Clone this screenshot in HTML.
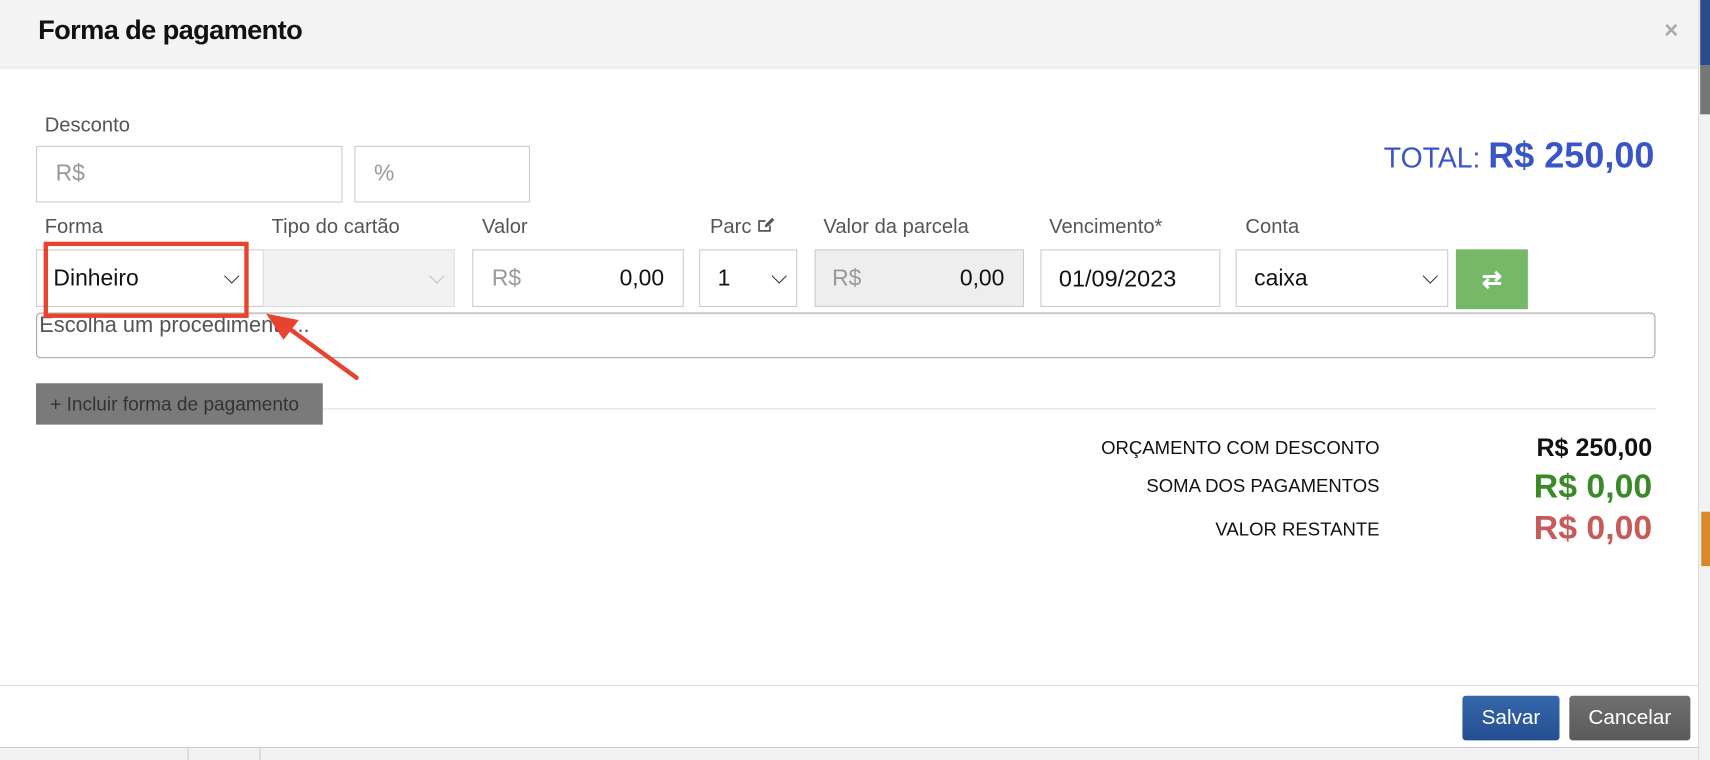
<!DOCTYPE html>
<html><head><meta charset="utf-8"><style>
*{box-sizing:border-box;margin:0;padding:0}
html,body{width:1710px;height:760px;overflow:hidden;background:#fff;font-family:"Liberation Sans",Arial,sans-serif}
#w{position:absolute;left:0;top:0;width:1568px;height:698px;transform:scale(1.09056,1.0888);transform-origin:0 0}
.a{position:absolute}
.lbl{position:absolute;font-size:18.5px;color:#555;top:197px}
.box{position:absolute;top:229px;height:53px;border:1px solid #ccc;background:#fff;font-size:21px;color:#111}
.ph{color:#999}
.chev{position:absolute;right:10px;top:18px;width:11px;height:11px;border-right:1.6px solid #222;border-bottom:1.6px solid #222;transform:rotate(45deg) scale(.9,.9);transform-origin:center}
.sl{position:absolute;font-size:17px;color:#111;right:303px}
.sv{position:absolute;right:53px;font-weight:bold}
</style></head><body><div id="w">
<div class="a" style="left:0;top:0;width:1557px;height:63px;background:#f4f4f4;border-bottom:1px solid #e6e6e6"></div>
<div class="a" style="left:35px;top:14px;font-size:25px;font-weight:bold;color:#111;letter-spacing:-0.6px">Forma de pagamento</div>
<div class="a" style="left:1526px;top:15px;font-size:22px;font-weight:bold;color:#aaa">×</div>
<div class="a" style="left:1557px;top:0;width:11px;height:698px;background:#f2f2f2;border-left:1px solid #ddd"></div>
<div class="a" style="left:1559px;top:0;width:9px;height:60px;background:#2a4a8a"></div>
<div class="a" style="left:1559px;top:60px;width:9px;height:45px;background:#777"></div>
<div class="a" style="left:1560px;top:470px;width:8px;height:50px;background:#d88a2a"></div>

<div class="a" style="left:41px;top:104px;font-size:18.5px;color:#555">Desconto</div>
<div class="box" style="left:33px;top:134px;width:281px;height:52px"><span class="a ph" style="left:17px;top:13px">R$</span></div>
<div class="box" style="left:325px;top:134px;width:161px;height:52px"><span class="a ph" style="left:17px;top:13px">%</span></div>
<div class="a" style="right:51px;top:124px;color:#3a55c8;white-space:nowrap"><span style="font-size:26px">TOTAL: </span><span style="font-size:33px;font-weight:bold">R$ 250,00</span></div>

<div class="lbl" style="left:41px">Forma</div>
<div class="lbl" style="left:249px">Tipo do cartão</div>
<div class="lbl" style="left:442px">Valor</div>
<div class="lbl" style="left:651px">Parc <svg width="17" height="16" viewBox="0 0 17 16" style="vertical-align:-1px"><path d="M12 8v5H2V4h6" fill="none" stroke="#555" stroke-width="1.6"/><path d="M7 10l1-3 6-6 2 2-6 6z" fill="#555"/></svg></div>
<div class="lbl" style="left:755px">Valor da parcela</div>
<div class="lbl" style="left:962px">Vencimento*</div>
<div class="lbl" style="left:1142px">Conta</div>

<div class="box" style="left:33px;width:211px"><span class="a" style="left:15px;top:14px;font-size:21px">Dinheiro</span><i class="chev" style="right:25px"></i></div>
<div class="box" style="left:241px;width:176px;background:#f2f2f2;border-color:#ddd"><i class="chev" style="border-color:#bbb"></i></div>
<div class="box" style="left:433px;width:194px"><span class="a ph" style="left:17px;top:14px">R$</span><span class="a" style="right:17px;top:14px">0,00</span></div>
<div class="box" style="left:641px;width:90px"><span class="a" style="left:16px;top:14px">1</span><i class="chev"></i></div>
<div class="box" style="left:747px;width:192px;background:#eee"><span class="a ph" style="left:15px;top:14px">R$</span><span class="a" style="right:17px;top:14px">0,00</span></div>
<div class="box" style="left:954px;width:165px"><span class="a" style="left:16px;top:14px;font-size:21.5px">01/09/2023</span></div>
<div class="box" style="left:1133px;width:195px"><span class="a" style="left:16px;top:14px;font-size:21px">caixa</span><i class="chev"></i></div>
<div class="a" style="left:1335px;top:229px;width:66px;height:55px;background:#74b868;color:#fff;font-size:22px;font-weight:bold;text-align:center;line-height:55px">⇄</div>

<div class="a" style="left:33px;top:287px;width:1485px;height:42px;border:1px solid #aaa;border-radius:4px;box-shadow:inset 0 2px 3px rgba(0,0,0,.06)"><span class="a" style="left:2px;top:0px;font-size:20px;color:#555">Escolha um procedimento...</span></div>

<div class="a" style="left:40px;top:222px;width:188px;height:70px;border:4px solid #e8432e"></div>
<svg class="a" style="left:230px;top:280px" width="110" height="80"><line x1="97" y1="67" x2="30" y2="18" stroke="#e8432e" stroke-width="4" stroke-linecap="round"/><path d="M14 8 L44 14 L30 32 Z" fill="#e8432e"/></svg>

<div class="a" style="left:296px;top:375px;width:1222px;height:1px;background:#ddd"></div>
<div class="a" style="left:33px;top:352px;width:263px;height:38px;background:#7a7a7a;color:#333;font-size:17.5px;line-height:38px;padding-left:13px;white-space:nowrap">+ Incluir forma de pagamento</div>

<div class="sl" style="top:402px">ORÇAMENTO COM DESCONTO</div>
<div class="sl" style="top:437px">SOMA DOS PAGAMENTOS</div>
<div class="sl" style="top:477px">VALOR RESTANTE</div>
<div class="sv" style="top:398px;font-size:23px;color:#111">R$ 250,00</div>
<div class="sv" style="top:429px;font-size:31px;color:#3a8a2a">R$ 0,00</div>
<div class="sv" style="top:467px;font-size:31px;color:#c85a5a">R$ 0,00</div>

<div class="a" style="left:0;top:629px;width:1557px;height:1px;background:#ddd"></div>
<div class="a" style="left:1341px;top:639px;width:89px;height:41px;background:linear-gradient(#3567aa,#244f92);border-radius:3px;color:#fff;font-size:19px;text-align:center;line-height:41px">Salvar</div>
<div class="a" style="left:1439px;top:639px;width:111px;height:41px;background:linear-gradient(#707070,#5a5a5a);border-radius:3px;color:#fff;font-size:19px;text-align:center;line-height:41px">Cancelar</div>
<div class="a" style="left:0;top:686px;width:1557px;height:12px;background:#f2f2f2;border-top:1px solid #ccc"></div>
<div class="a" style="left:172px;top:687px;width:1px;height:11px;background:#ccc"></div>
<div class="a" style="left:238px;top:687px;width:1px;height:11px;background:#ccc"></div>
</div></body></html>
